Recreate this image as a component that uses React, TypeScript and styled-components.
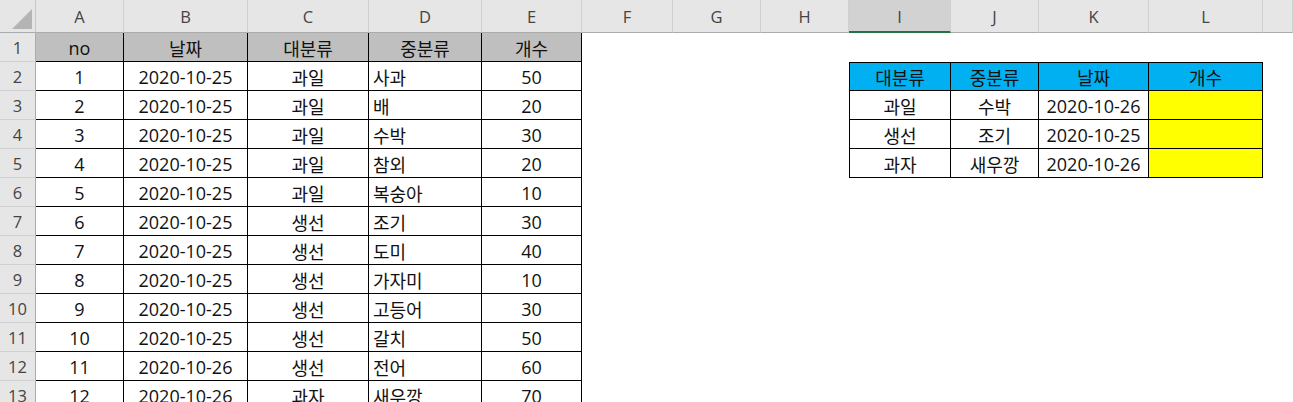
import React from "react";
import styled, { createGlobalStyle, css } from "styled-components";

const Global = createGlobalStyle`
  html, body { margin: 0; padding: 0; background: #ffffff; overflow: hidden; }
  body { width: 1293px; height: 402px; }
`;

const COLS = ["A", "B", "C", "D", "E", "F", "G", "H", "I", "J", "K", "L", ""];
const WIDTHS = [88, 124, 121, 113, 100, 91, 88, 88, 102, 88, 110, 114, 30];

const Sheet = styled.div`
  display: grid;
  grid-template-columns: 36px ${WIDTHS.map((w) => `${w}px`).join(" ")};
  grid-template-rows: 33px repeat(13, 29px);
  font-family: "Open Sans", "Noto Sans CJK KR", sans-serif;
  color: #000;
  width: 1293px;
  height: 402px;
  overflow: hidden;
`;

const Corner = styled.div`
  position: relative;
  background: #e6e6e6;
  border-right: 1px solid #c8c8c8;
  border-bottom: 1px solid #ababab;
  box-sizing: border-box;
  &::after {
    content: "";
    position: absolute;
    right: 3px;
    bottom: 3px;
    width: 0;
    height: 0;
    border-left: 20px solid transparent;
    border-bottom: 20px solid #b4b4b4;
  }
`;

const ColHead = styled.div<{ $active?: boolean }>`
  display: flex;
  align-items: center;
  justify-content: center;
  background: ${(p) => (p.$active ? "#d2d2d2" : "#e6e6e6")};
  border-right: 1px solid #d0d0d0;
  border-bottom: ${(p) => (p.$active ? "2px solid #217346" : "1px solid #ababab")};
  box-sizing: border-box;
  font-size: 16.5px;
  color: #444;
  padding-top: 1px;
`;

const RowHead = styled.div`
  display: flex;
  align-items: center;
  justify-content: center;
  background: #e6e6e6;
  border-right: 1px solid #ababab;
  border-bottom: 1px solid #d0d0d0;
  box-sizing: border-box;
  font-size: 16.5px;
  color: #444;
`;

type Fill = "none" | "gray" | "blue" | "yellow";
const fills: Record<Fill, string> = {
  none: "#ffffff",
  gray: "#bfbfbf",
  blue: "#00b0f0",
  yellow: "#ffff00",
};

const Cell = styled.div<{
  $fill?: Fill;
  $align?: "left" | "center";
  $right?: boolean;
  $bottom?: boolean;
  $top?: boolean;
  $left?: boolean;
}>`
  display: flex;
  align-items: center;
  justify-content: ${(p) => (p.$align === "left" ? "flex-start" : "center")};
  padding: 1px 4px 0;
  box-sizing: border-box;
  background: ${(p) => fills[p.$fill ?? "none"]};
  font-size: 18px;
  color: #111;
  white-space: nowrap;
  overflow: hidden;
  ${(p) => p.$right && css`border-right: 1px solid #000;`}
  ${(p) => p.$bottom && css`border-bottom: 1px solid #000;`}
  ${(p) => p.$top && css`border-top: 1px solid #000;`}
  ${(p) => p.$left && css`border-left: 1px solid #000;`}
`;

const left: (string | number)[][] = [
  ["no", "날짜", "대분류", "중분류", "개수"],
  [1, "2020-10-25", "과일", "사과", 50],
  [2, "2020-10-25", "과일", "배", 20],
  [3, "2020-10-25", "과일", "수박", 30],
  [4, "2020-10-25", "과일", "참외", 20],
  [5, "2020-10-25", "과일", "복숭아", 10],
  [6, "2020-10-25", "생선", "조기", 30],
  [7, "2020-10-25", "생선", "도미", 40],
  [8, "2020-10-25", "생선", "가자미", 10],
  [9, "2020-10-25", "생선", "고등어", 30],
  [10, "2020-10-25", "생선", "갈치", 50],
  [11, "2020-10-26", "생선", "전어", 60],
  [12, "2020-10-26", "과자", "새우깡", 70],
];

const right: string[][] = [
  ["대분류", "중분류", "날짜", "개수"],
  ["과일", "수박", "2020-10-26", ""],
  ["생선", "조기", "2020-10-25", ""],
  ["과자", "새우깡", "2020-10-26", ""],
];

export default function App() {
  const cells: React.ReactNode[] = [];
  cells.push(<Corner key="corner" />);
  COLS.forEach((c, i) =>
    cells.push(
      <ColHead key={`ch${i}`} $active={c === "I"}>
        {c}
      </ColHead>
    )
  );
  for (let r = 0; r < 13; r++) {
    cells.push(<RowHead key={`rh${r}`}>{r + 1}</RowHead>);
    for (let c = 0; c < 13; c++) {
      const key = `c${r}-${c}`;
      if (c < 5) {
        const v = left[r][c];
        cells.push(
          <Cell
            key={key}
            $fill={r === 0 ? "gray" : "none"}
            $align={r > 0 && c === 3 ? "left" : "center"}
            $right
            $bottom
          >
            {v}
          </Cell>
        );
      } else if (c >= 8 && c <= 11 && r >= 1 && r <= 4) {
        const tr = r - 1;
        const tc = c - 8;
        cells.push(
          <Cell
            key={key}
            $fill={tr === 0 ? "blue" : tc === 3 ? "yellow" : "none"}
            $right
            $bottom
            $top={tr === 0}
            $left={tc === 0}
          >
            {right[tr][tc]}
          </Cell>
        );
      } else {
        cells.push(<Cell key={key} />);
      }
    }
  }
  return (
    <>
      <Global />
      <Sheet>{cells}</Sheet>
    </>
  );
}
